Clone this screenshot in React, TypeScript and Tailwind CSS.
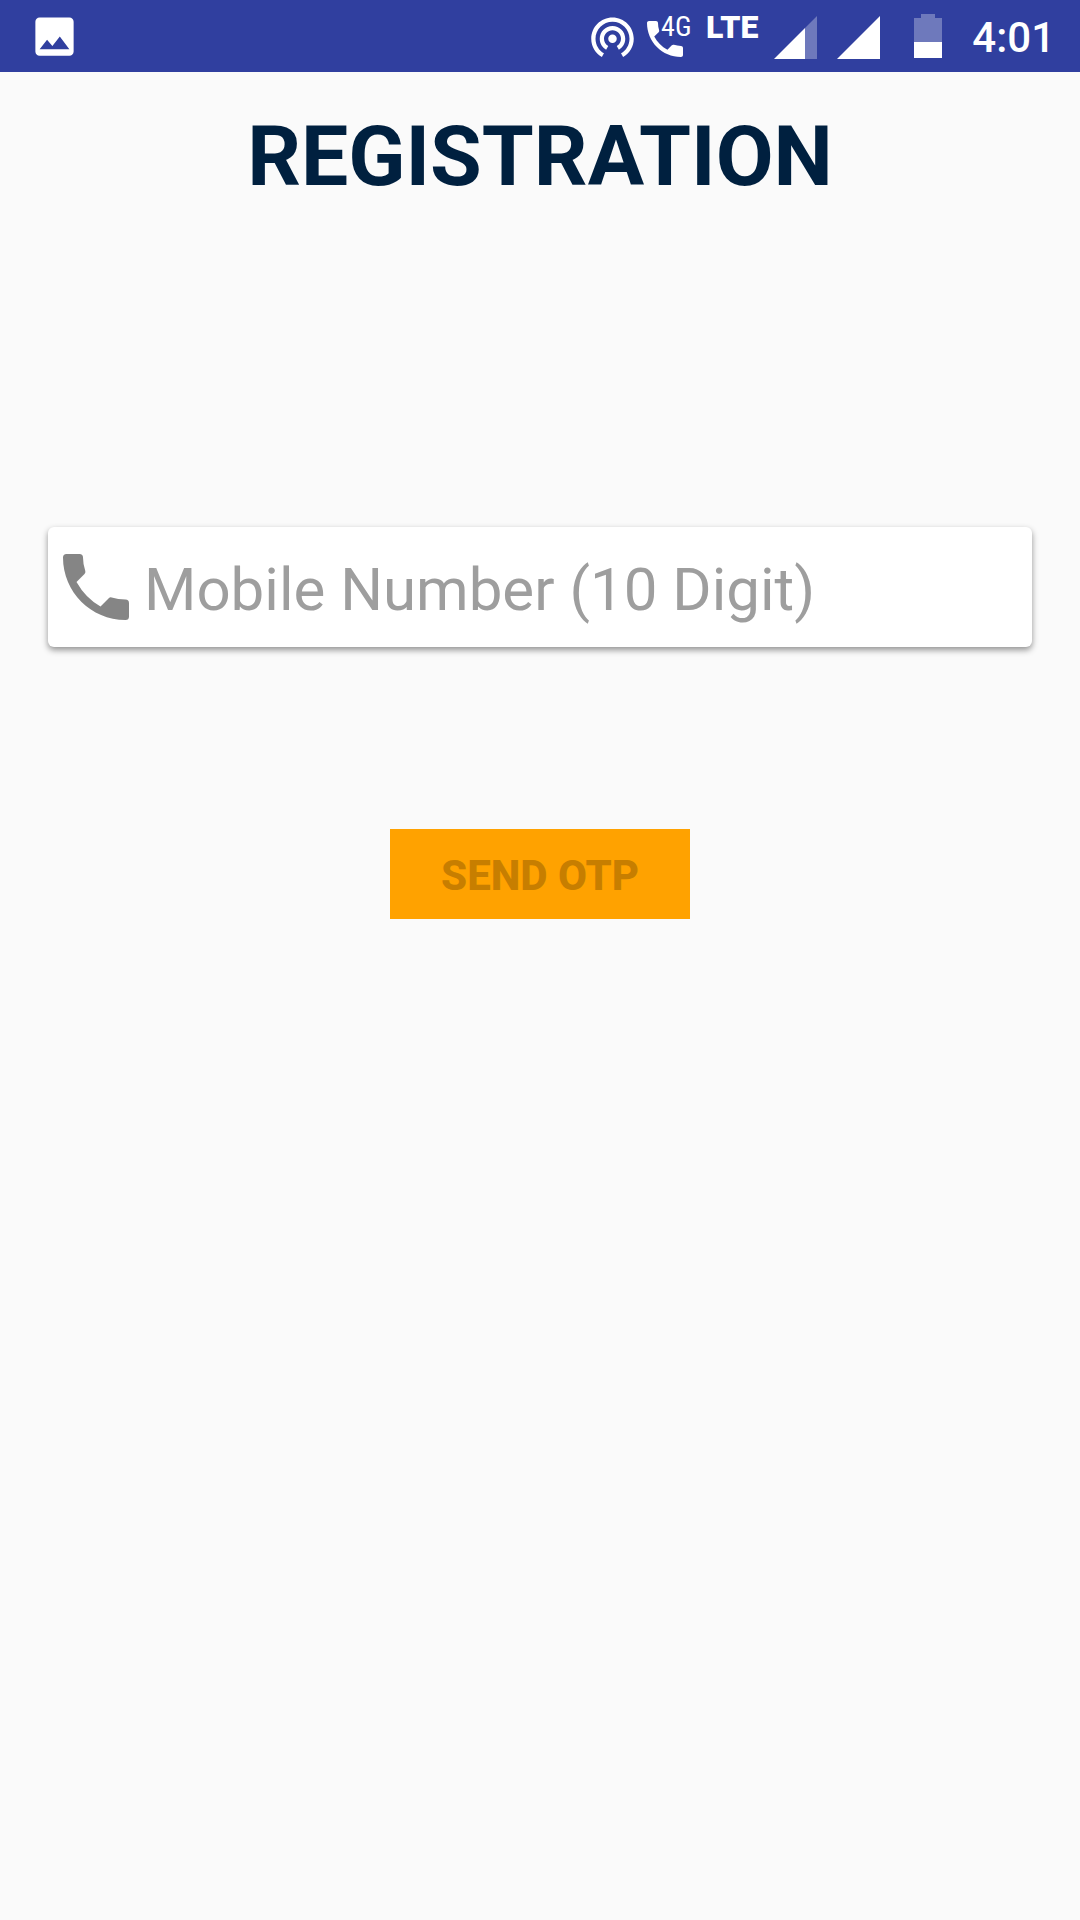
import React, { useState } from "react";

function ImageIcon() {
  return (
    <svg viewBox="0 0 24 24" className="size-[51px] fill-white" aria-hidden="true">
      <path d="M21 19V5c0-1.1-.9-2-2-2H5c-1.1 0-2 .9-2 2v14c0 1.1.9 2 2 2h14c1.1 0 2-.9 2-2zM5 18l3.500-4.500 2.500 3.010L14.500 12l4.500 6H5z" />
    </svg>
  );
}

function HotspotIcon() {
  return (
    <svg viewBox="0 0 24 24" className="size-[51px] fill-white" aria-hidden="true">
      <path d="M12 11c-1.1 0-2 .9-2 2s.9 2 2 2 2-.9 2-2-.9-2-2-2zm6 2c0-3.31-2.69-6-6-6s-6 2.69-6 6c0 2.22 1.21 4.15 3 5.19l1-1.74c-1.190-.7-2-1.970-2-3.450 0-2.210 1.790-4 4-4s4 1.790 4 4c0 1.480-.81 2.750-2 3.450l1 1.740c1.790-1.040 3-2.970 3-5.190zM12 3C6.480 3 2 7.480 2 13c0 3.700 2.010 6.920 4.990 8.650l1-1.730C5.610 18.530 4 15.960 4 13c0-4.420 3.580-8 8-8s8 3.580 8 8c0 2.960-1.610 5.530-4 6.920l1 1.730c2.990-1.730 5-4.950 5-8.650 0-5.520-4.480-10-10-10z" />
    </svg>
  );
}

function CallIcon() {
  return (
    <svg viewBox="0 0 24 24" className="size-12 fill-white" aria-hidden="true">
      <path d="M20 15.500c-1.250 0-2.450-.2-3.570-.57-.35-.11-.74-.03-1.020.24l-2.200 2.200c-2.830-1.440-5.150-3.750-6.590-6.580l2.200-2.210c.28-.27.36-.66.25-1.010C8.700 6.450 8.500 5.250 8.500 4c0-.55-.45-1-1-1H4c-.55 0-1 .45-1 1 0 9.390 7.610 17 17 17 .55 0 1-.45 1-1v-3.500c0-.55-.45-1-1-1z" />
    </svg>
  );
}

function PhoneIcon() {
  return (
    <svg viewBox="0 0 66 66" className="size-[66px] shrink-0 fill-[#858585]" aria-hidden="true">
      <path d="M3.500 0H16.500Q20 0 20 3.500Q20 10 22.300 17Q22.800 18.500 21.500 20L13.500 28Q22.500 44 37.500 52.500L46 44Q47 43 48.700 43.500Q55 45.600 62.500 45.600Q66 45.600 66 49.200V62.500Q66 66 62.500 66C28 66 0 38 0 3.500Q0 0 3.500 0Z" />
    </svg>
  );
}

function PartialSignalIcon() {
  return (
    <svg viewBox="0 0 43 43" className="size-[43px] fill-white" aria-hidden="true">
      <path d="M31 12V43H0z" />
      <path d="M31 12L43 0V43H31z" fillOpacity="0.3" />
    </svg>
  );
}

function FullSignalIcon() {
  return (
    <svg viewBox="0 0 43 43" className="size-[43px] fill-white" aria-hidden="true">
      <path d="M43 0V43H0z" />
    </svg>
  );
}

function BatteryIcon() {
  return (
    <svg viewBox="0 0 28 44" className="h-11 w-7 fill-white" aria-hidden="true">
      <path d="M7 0H21V4H28V28H0V4H7z" fillOpacity="0.3" />
      <path d="M0 28H28V44H0z" />
    </svg>
  );
}

function StatusBar() {
  return (
    <header className="flex h-18 items-center bg-[#303f9f] pr-[25px] pl-[29px] text-white">
      <ImageIcon />
      <div className="ml-auto flex items-center">
        <HotspotIcon />
        <div className="relative ml-[3px] flex pt-1.5">
          <CallIcon />
          <span className="absolute top-0.5 left-5 font-['Roboto_Condensed',Roboto,sans-serif] text-[28px] leading-8 font-normal">
            4G
          </span>
        </div>
        <span className="ml-[17px] pb-[18px] text-[32px] leading-8 font-black">LTE</span>
        <div className="ml-4 flex items-center gap-5 pt-0.5">
          <PartialSignalIcon />
          <FullSignalIcon />
        </div>
        <div className="ml-[34px]">
          <BatteryIcon />
        </div>
        <time className="ml-[30px] pt-1 text-[42px] leading-12 font-medium">4:01</time>
      </div>
    </header>
  );
}

export default function App() {
  const [mobile, setMobile] = useState("");

  return (
    <div className="min-h-screen bg-[#fafafa] font-[Roboto,sans-serif]">
      <StatusBar />
      <main className="flex flex-col items-center px-12 pt-[37px]">
        <h1 className="text-[84px] leading-24 font-bold text-[#00203f]">REGISTRATION</h1>
        <form className="mt-[322px] flex w-full flex-col items-center" onSubmit={(e) => e.preventDefault()}>
          <label className="flex h-30 w-full items-center rounded-md bg-white pr-4 pl-[15px] shadow-[0_3px_6px_rgba(0,0,0,0.42)]">
            <PhoneIcon />
            <input
              type="tel"
              aria-label="Mobile Number (10 Digit)"
              placeholder="Mobile Number (10 Digit)"
              value={mobile}
              maxLength={10}
              onChange={(e) => setMobile(e.target.value)}
              className="ml-[15px] min-w-0 flex-1 bg-transparent pt-1.5 text-[60px] leading-18 text-[#212121] outline-none placeholder:text-[#9e9e9e] placeholder:opacity-100"
            />
          </label>
          <button
            type="submit"
            disabled={mobile.length !== 10}
            className="mt-[182px] h-[90px] w-[300px] bg-[#ffa200] pt-1 text-[42px] leading-12 font-extrabold text-black disabled:text-[#c77e00]"
          >
            SEND OTP
          </button>
        </form>
      </main>
    </div>
  );
}
